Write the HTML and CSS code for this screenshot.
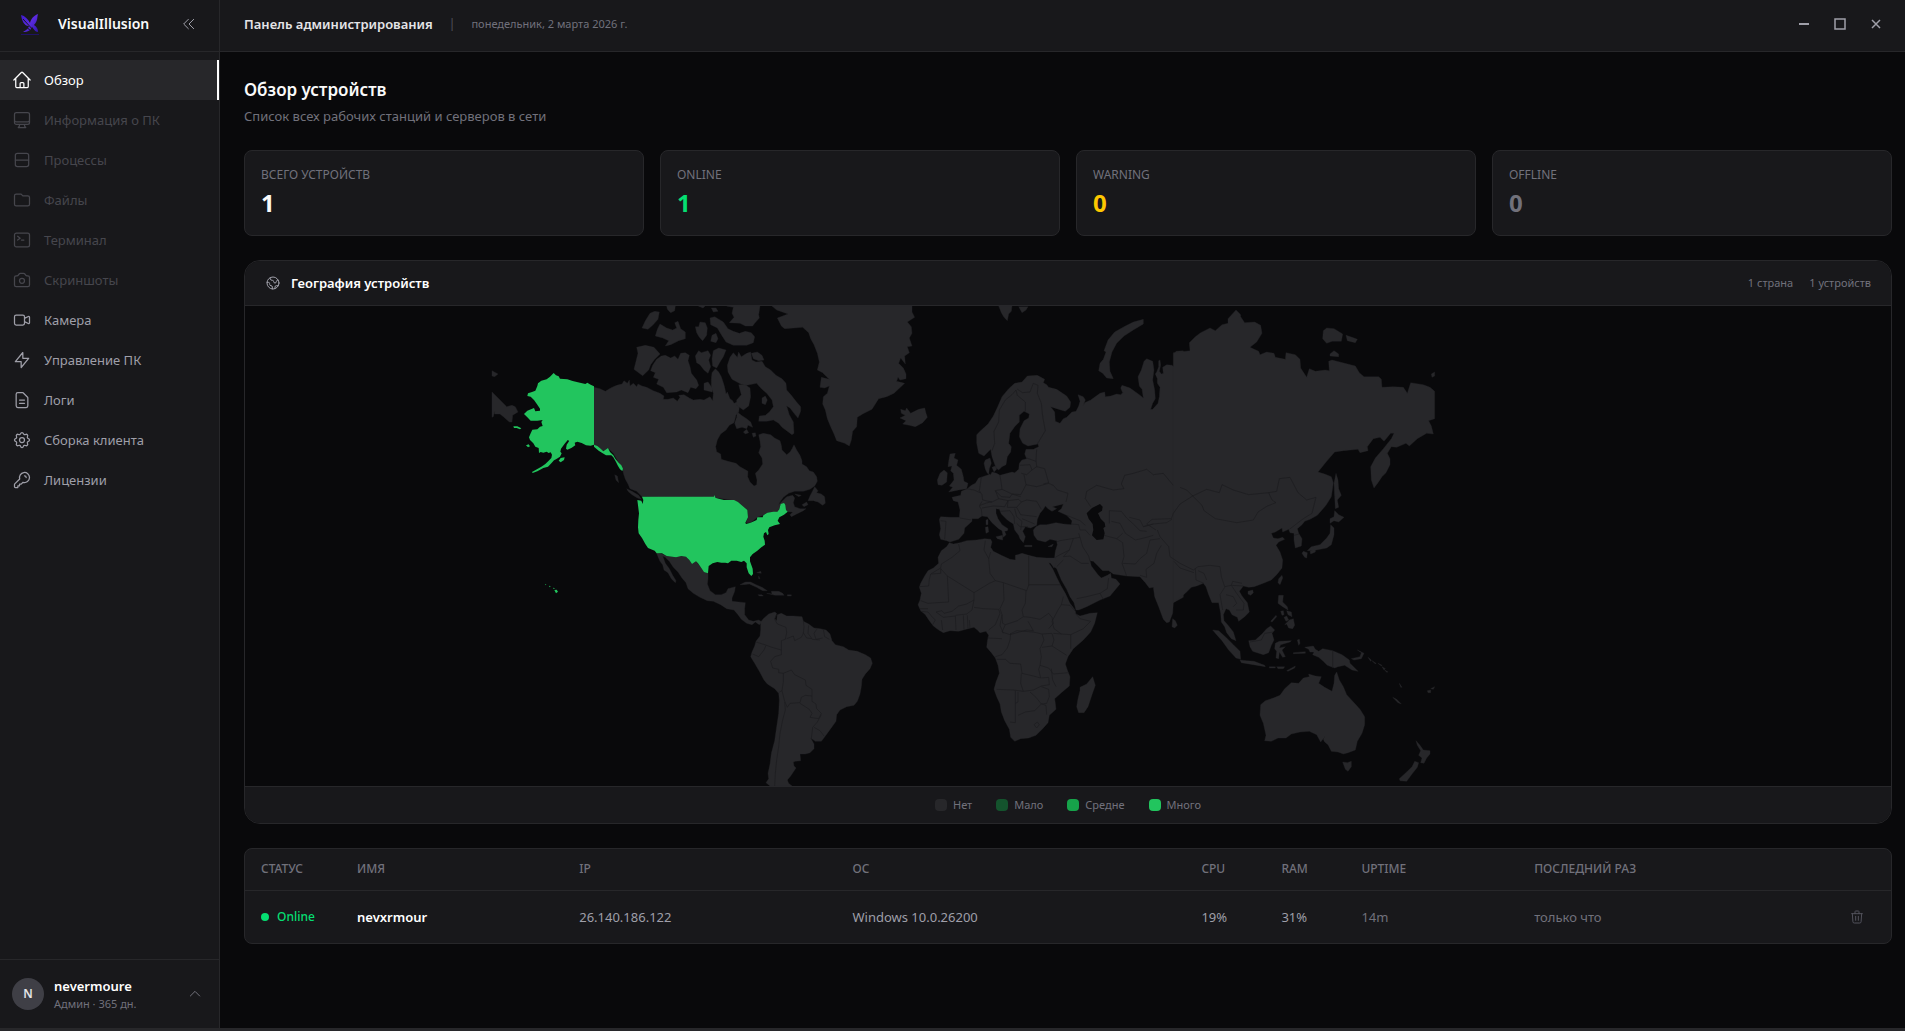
FILE: index.html
```html
<!DOCTYPE html>
<html lang="ru">
<head>
<meta charset="utf-8">
<title>VisualIllusion</title>
<link rel="stylesheet" href="styles.css">
</head>
<body>
<div class="app">
  <aside class="sidebar">
    <div class="brand">
      <svg class="brand-logo" viewBox="0 0 24 24" aria-hidden="true">
        <defs><linearGradient id="lg" x1="0" y1="0" x2="1" y2="1"><stop offset="0" stop-color="#3a17c9"/><stop offset=".5" stop-color="#5b2be0"/><stop offset="1" stop-color="#3216a8"/></linearGradient></defs>
        <path fill="url(#lg)" d="M3 3c4 1 7 4 9 8 1-4 3-7 8-9-1 3 0 7-4 11 3 2 4 4 4 7-3 0-4-3-6-5-1 3-4 5-9 5 3-2 5-3 6-6-5 0-7-5-8-11z"/>
        <path stroke="#18181b" stroke-width="1" fill="none" d="M5 7l12 13M4 11l10 9"/>
        <path stroke="#1e1263" stroke-width="1" d="M3 22.500h18"/>
      </svg>
      <span class="brand-name">VisualIllusion</span>
      <button class="icon-button" type="button" aria-label="Свернуть меню"><svg class="icon-small" viewBox="0 0 24 24"><path d="M11 19l-7-7 7-7m8 14l-7-7 7-7"/></svg></button>
    </div>
    <nav class="nav">
      <a class="nav-item is-active" href="#overview"><svg class="icon" viewBox="0 0 24 24"><path d="M2.250 12l8.954-8.955c.44-.439 1.152-.439 1.591 0L21.750 12M4.500 9.750v10.125c0 .621.504 1.125 1.125 1.125H9.750v-4.875c0-.621.504-1.125 1.125-1.125h2.250c.621 0 1.125.504 1.125 1.125V21h4.125c.621 0 1.125-.504 1.125-1.125V9.750M8.250 21h8.250"/></svg>Обзор</a>
      <a class="nav-item is-disabled" href="#pc"><svg class="icon" viewBox="0 0 24 24"><path d="M9 17.250v1.007a3 3 0 01-.879 2.122L7.500 21h9l-.621-.621A3 3 0 0115 18.257V17.250m6-12V15a2.250 2.250 0 01-2.250 2.250H5.250A2.250 2.250 0 013 15V5.250m18 0A2.250 2.250 0 0018.750 3H5.250A2.250 2.250 0 003 5.250m18 0V12a2.250 2.250 0 01-2.250 2.250H5.250A2.250 2.250 0 013 12V5.250"/></svg>Информация о ПК</a>
      <a class="nav-item is-disabled" href="#processes"><svg class="icon" viewBox="0 0 24 24"><rect x="4" y="4" width="16" height="16" rx="2.500"/><path d="M4 12h16"/></svg>Процессы</a>
      <a class="nav-item is-disabled" href="#files"><svg class="icon" viewBox="0 0 24 24"><path d="M3 7v10a2 2 0 002 2h14a2 2 0 002-2V9a2 2 0 00-2-2h-6l-2-2H5a2 2 0 00-2 2z"/></svg>Файлы</a>
      <a class="nav-item is-disabled" href="#terminal"><svg class="icon" viewBox="0 0 24 24"><path d="M6.750 7.500l3 2.250-3 2.250m4.500 0h3m-9 8.250h13.500A2.250 2.250 0 0021 18V6a2.250 2.250 0 00-2.250-2.250H5.250A2.250 2.250 0 003 6v12a2.250 2.250 0 002.250 2.250z"/></svg>Терминал</a>
      <a class="nav-item is-disabled" href="#screens"><svg class="icon" viewBox="0 0 24 24"><path d="M3 9a2 2 0 012-2h.930a2 2 0 001.664-.890l.812-1.220A2 2 0 0110.070 4h3.860a2 2 0 011.664.890l.812 1.220A2 2 0 0018.070 7H19a2 2 0 012 2v9a2 2 0 01-2 2H5a2 2 0 01-2-2V9z"/><circle cx="12" cy="13" r="3"/></svg>Скриншоты</a>
      <a class="nav-item" href="#camera"><svg class="icon" viewBox="0 0 24 24"><path d="M15 10l4.553-2.276A1 1 0 0121 8.618v6.764a1 1 0 01-1.447.894L15 14M5 18h8a2 2 0 002-2V8a2 2 0 00-2-2H5a2 2 0 00-2 2v8a2 2 0 002 2z"/></svg>Камера</a>
      <a class="nav-item" href="#control"><svg class="icon" viewBox="0 0 24 24"><path d="M13 10V3L4 14h7v7l9-11h-7z"/></svg>Управление ПК</a>
      <a class="nav-item" href="#logs"><svg class="icon" viewBox="0 0 24 24"><path d="M9 12h6m-6 4h6m2 5H7a2 2 0 01-2-2V5a2 2 0 012-2h5.586a1 1 0 01.707.293l5.414 5.414a1 1 0 01.293.707V19a2 2 0 01-2 2z"/></svg>Логи</a>
      <a class="nav-item" href="#build"><svg class="icon" viewBox="0 0 24 24"><path d="M10.325 4.317c.426-1.756 2.924-1.756 3.350 0a1.724 1.724 0 002.573 1.066c1.543-.940 3.310.826 2.370 2.370a1.724 1.724 0 001.065 2.572c1.756.426 1.756 2.924 0 3.350a1.724 1.724 0 00-1.066 2.573c.940 1.543-.826 3.310-2.370 2.370a1.724 1.724 0 00-2.572 1.065c-.426 1.756-2.924 1.756-3.350 0a1.724 1.724 0 00-2.573-1.066c-1.543.940-3.310-.826-2.370-2.370a1.724 1.724 0 00-1.065-2.572c-1.756-.426-1.756-2.924 0-3.350a1.724 1.724 0 001.066-2.573c-.940-1.543.826-3.310 2.370-2.370.996.608 2.296.070 2.572-1.065z"/><circle cx="12" cy="12" r="3"/></svg>Сборка клиента</a>
      <a class="nav-item" href="#licenses"><svg class="icon" viewBox="0 0 24 24"><path d="M15 7a2 2 0 012 2m4 0a6 6 0 01-7.743 5.743L11 17H9v2H7v2H4a1 1 0 01-1-1v-2.586a1 1 0 01.293-.707l5.964-5.964A6 6 0 1121 9z"/></svg>Лицензии</a>
    </nav>
    <button class="account" type="button">
      <span class="avatar">N</span>
      <span class="account-text"><span class="account-name">nevermoure</span><span class="account-plan">Админ · 365 дн.</span></span>
      <svg class="icon-small" viewBox="0 0 24 24"><path d="M5 15l7-7 7 7"/></svg>
    </button>
  </aside>

  <div class="workspace">
    <header class="topbar">
      <span class="topbar-title">Панель администрирования</span>
      <span class="topbar-separator">|</span>
      <span class="topbar-date">понедельник, 2 марта 2026 г.</span>
      <div class="window-controls">
        <button class="window-button" type="button" aria-label="Свернуть"><svg class="window-icon" viewBox="0 0 16 16"><path d="M3 8h10" stroke-width="2"/></svg></button>
        <button class="window-button" type="button" aria-label="Развернуть"><svg class="window-icon" viewBox="0 0 16 16"><path d="M3 3h10v10H3z"/></svg></button>
        <button class="window-button" type="button" aria-label="Закрыть"><svg class="window-icon" viewBox="0 0 16 16"><path d="M4 4l8 8M12 4l-8 8"/></svg></button>
      </div>
    </header>

    <main class="content">
      <div class="page-heading">
        <h1 class="page-title">Обзор устройств</h1>
        <p class="page-subtitle">Список всех рабочих станций и серверов в сети</p>
      </div>

      <section class="stats">
        <div class="stat"><div class="stat-label">Всего устройств</div><div class="stat-value">1</div></div>
        <div class="stat"><div class="stat-label">Online</div><div class="stat-value is-online">1</div></div>
        <div class="stat"><div class="stat-label">Warning</div><div class="stat-value is-warning">0</div></div>
        <div class="stat"><div class="stat-label">Offline</div><div class="stat-value is-offline">0</div></div>
      </section>

      <section class="geo">
        <div class="geo-header">
          <svg class="icon-small" viewBox="0 0 24 24"><path d="M3.055 11H5a2 2 0 012 2v1a2 2 0 002 2 2 2 0 012 2v2.945M8 3.935V5.500A2.500 2.500 0 0010.500 8h.5a2 2 0 012 2 2 2 0 104 0 2 2 0 012-2h1.064M15 20.488V18a2 2 0 012-2h3.064M21 12a9 9 0 11-18 0 9 9 0 0118 0z"/></svg>
          <h2 class="geo-title">География устройств</h2>
          <span class="geo-count">1 страна</span>
          <span class="geo-count">1 устройств</span>
        </div>
        <svg class="map" viewBox="0 0 4938 1440" role="img" aria-label="Карта мира">
          <!-- North America -->
          <g transform="translate(705 -18)">
            <path class="land" d="M342 262L360 266 376 274 392 264 410 256 426 252 432 242 442 250 448 240 450 258 460 250 470 260 474 252 486 258 500 262 520 272 540 280 552 288 550 298 564 298 580 294 592 304 600 292 596 286 612 284 628 294 640 300 660 298 672 300 690 290 698 302 700 280 694 262 694 236 696 218 706 206 716 216 724 230 730 248 734 262 738 282 742 276 750 296 758 302 762 310 772 306 778 322 776 336 768 346 762 368 748 376 738 390 722 402 712 420 707 440 710 455 722 462 724 478 744 484 768 490 780 500 794 508 804 514 803 530 810 546 822 558 830 554 831 540 826 520 836 510 848 492 846 474 836 458 842 440 840 424 836 404 850 400 872 404 884 414 900 422 904 436 906 450 920 464 930 456 936 446 942 434 950 450 960 466 966 482 966 492 980 500 988 512 1000 516 1010 530 1012 544 1004 558 990 568 970 574 944 574 926 580 910 592 900 606 896 614 904 606 920 590 938 586 944 594 940 608 944 620 960 626 978 626 970 632 950 642 934 650 930 644 938 636 923 635 918 630 916 612 902 612 898 628 892 635 862 638 850 646 832 652 812 668 798 668 804 652 802 630 774 606 752 600 706 593 486 590 470 574 450 566 444 552 436 538 430 520 428 506 416 488 400 460 384 444 370 454 342 434Z"/>
            <path class="land" d="M440 566L456 574 476 586 484 598 472 594 456 584 444 574ZM404 524L412 528 416 548 408 540ZM1004 560L1014 572 1010 578 1024 582 1034 590 1036 610 1028 616 1014 606 1000 602 984 602 990 588 998 572ZM944 582L964 586 956 590ZM966 614L980 606 984 614 972 620Z"/>
            <path class="land" d="M470 142L496 136 522 142 540 162 524 178 512 194 506 210 488 227 462 208 468 184 474 160ZM544 168L556 166 572 174 584 168 594 178 602 160 616 158 628 166 624 182 630 200 634 220 650 240 656 256 648 266 632 262 624 278 604 270 590 276 560 278 550 262 530 252 536 238 520 232 526 218 512 212 518 196 530 178ZM646 168L656 152 664 158 684 152 692 166 686 180 692 200 684 220 672 210 660 194 650 188ZM700 152L716 144 738 150 730 170 720 186 710 204 698 198 696 176ZM672 250L684 246 698 266 696 276 672 270Z"/>
            <path class="land" d="M742 196L750 172 760 158 772 172 776 156 784 170 800 160 812 156 816 180 828 186 846 184 856 200 872 210 888 226 906 236 918 250 920 270 934 286 948 304 962 320 962 334 954 354 942 340 930 324 920 318 928 344 940 366 942 400 936 404 920 392 906 382 896 370 880 360 860 364 836 364 838 348 856 346 868 336 880 320 876 300 860 280 840 262 830 250 800 256 782 252 756 238 744 216ZM814 160L832 156 846 166 852 180 836 182 820 176ZM846 294L856 288 862 300 856 314 846 310ZM776 254L796 254 810 264 812 290 806 318 790 330 770 316 770 300 784 284ZM772 336L784 346 800 356 812 366 818 382 804 376 800 386 786 382 770 386 764 370 770 352ZM790 396L800 388 806 398 796 402ZM816 400L826 398 828 408 820 412Z"/>
            <path class="land" d="M690 54L704 50 730 66 744 86 760 94 778 100 796 94 814 98 824 110 820 128 800 136 760 136 738 126 724 104 712 84 692 74ZM696 106L708 100 714 116 708 128 692 124ZM646 80L656 80 660 66 676 68 682 84 680 106 668 122 658 112 650 98ZM540 72L560 84 578 90 590 84 584 68 594 64 602 86 616 96 616 116 596 122 572 134 556 138 566 122 548 114 526 108 532 88ZM486 84L496 62 510 40 524 34 538 36 534 58 518 76 504 88ZM560 18L586 18 584 32 572 38 562 28ZM655 18L675 18 669 24ZM694 24L708 24 714 34 700 36ZM760 22L740 18 840 18 836 44 838 54 824 70 818 78 796 78 780 70 748 68 762 52 756 40Z"/>
            <path class="land" d="M36 276L60 300 80 320 96 316 106 320 114 336 98 346 96 366 88 366 70 350 60 342 44 342 44 334 40 350 36 352ZM36 212L54 222 44 230 36 228Z"/>
            <path class="land" d="M530 760L546 762 560 768 588 772 604 768 618 770 628 780 636 792 648 784 664 804 684 820 684 836 682 852 690 872 706 884 724 884 738 878 744 866 766 860 764 874 756 894 756 904 776 906 796 908 794 926 794 944 806 960 820 964 836 960 846 966 838 974 826 966 816 974 800 970 784 958 774 944 762 930 740 926 722 914 700 904 682 902 660 892 640 880 624 866 618 848 606 834 594 816 580 802 568 784 556 772 548 768 556 790 568 806 578 826 588 842 586 848 574 836 564 818 552 810 548 794 540 784 534 770Z"/>
            <path class="land" d="M780 854L796 846 812 846 828 854 846 862 862 872 848 872 830 862 808 852 790 854ZM860 880L876 882 874 874 896 874 908 880 912 886 886 886ZM834 884L846 884 850 888 838 888ZM922 884L934 884 934 888 922 888ZM830 818L842 814 844 820ZM836 828L840 836 836 836Z"/>
            <path class="land-active" d="M221 219L228 226 236 229 240 236 262 238 278 243 300 248 316 252 322 248 332 254 342 259 342 434 332 437 318 436 305 429 292 425 284 428 286 436 274 444 262 449 258 446 260 434 267 424 264 419 254 431 243 446 241 455 245 460 240 470 228 478 222 481 214 490 204 500 190 504 172 514 158 519 156 516 172 507 184 500 196 492 206 482 214 474 216 464 212 457 206 459 200 455 190 458 182 456 177 459 176 444 166 440 160 430 150 420 147 412 152 400 157 389 172 388 180 380 188 378 184 366 188 360 172 362 152 362 142 352 132 342 142 332 162 324 166 334 180 332 180 326 172 314 162 300 152 290 142 288 144 280 156 276 166 272 172 258 174 250 184 242 200 238 210 230ZM342 434L352 438 362 446 370 454 384 444 390 456 400 466 406 476 416 488 424 496 429 506 427 513 420 508 414 498 408 486 400 472 394 466 378 466 368 460 356 452 342 440ZM236 482L242 474 254 472 252 480 242 487ZM138 436L146 433 150 439 144 442ZM100 379L112 379 124 385 120 388 110 384 102 384ZM223 870L230 869 234 875 228 880ZM207 857L212 859 209 862ZM195 853L199 853 197 856ZM219 863L225 865 221 867Z"/>
            <path class="land-active" d="M486 590L702 590 704 585 706 593 716 596 732 600 752 600 762 600 774 606 788 618 802 630 804 652 796 668 798 672 812 668 830 660 832 652 848 652 850 646 862 638 880 635 892 635 898 628 902 612 912 609 916 614 918 630 923 635 912 644 898 652 893 662 900 672 884 676 868 682 864 690 866 702 862 706 858 696 852 700 850 710 854 722 855 734 844 742 832 752 818 762 810 772 810 784 818 806 819 822 814 828 806 820 800 802 800 790 792 782 784 786 770 782 754 782 744 790 736 788 724 788 712 786 698 790 686 798 684 820 672 816 664 804 654 790 648 784 636 792 628 780 618 770 604 768 588 772 560 768 546 760 530 760 524 752 504 744 496 732 486 714 476 700 474 682 475 660 477 640 472 600 484 602 488 612 490 600Z"/>
          </g>
          <!-- Greenland, Iceland, South America -->
          <g transform="translate(1485 -18)">
            <path class="land" d="M96 18L110 30 144 42 112 54 124 78 134 86 188 82 206 98 212 116 222 134 232 160 238 186 232 210 248 218 260 230 268 238 244 232 240 262 254 264 268 258 262 280 250 290 248 312 256 330 262 356 272 380 282 402 290 422 314 430 328 438 334 420 338 394 350 380 352 352 368 342 396 328 416 296 440 290 462 280 494 250 470 244 474 232 480 240 498 236 498 222 490 204 476 190 482 174 496 192 494 168 508 158 502 140 516 138 508 114 516 100 514 80 502 66 524 52 516 36 516 18Z"/>
            <path class="land" d="M482 328L496 332 500 324 512 340 524 334 536 328 554 324 558 340 562 352 548 368 526 380 508 376 488 372 498 362 480 354 496 346 484 340Z"/>
            <path class="land" d="M62 966L70 956 86 942 104 936 110 940 104 956 110 962 112 944 124 940 140 948 160 948 186 950 190 964 206 972 222 984 240 986 258 990 270 1002 276 1022 286 1034 310 1040 326 1050 352 1054 376 1064 392 1074 397 1090 390 1106 376 1122 366 1138 364 1160 360 1182 352 1204 342 1216 320 1220 300 1230 290 1244 288 1264 272 1286 256 1308 244 1324 226 1324 212 1314 222 1332 222 1346 210 1358 196 1362 180 1362 182 1382 166 1384 160 1386 162 1398 168 1404 160 1416 152 1428 142 1440 146 1450 156 1458 90 1458 78 1448 86 1436 84 1420 90 1392 94 1360 104 1322 110 1280 116 1240 118 1200 116 1180 104 1166 82 1152 72 1140 58 1114 44 1090 32 1070 36 1056 44 1038 48 1024 60 1008 62 990Z"/>
            <path class="frontier" d="M110 944L104 958 112 972 138 982 140 998 136 1018 124 1022 124 1050M48 1026L74 1034 96 1042 124 1050 124 1064 104 1070 92 1084 98 1104 116 1108 116 1118M78 1036L72 1050 56 1070 38 1062M190 962L192 980 190 1000 184 1012 164 1022 160 1008 140 1016M206 976L204 1000 216 1016 200 1014 190 998M230 988L222 1000 228 1018 248 1014M250 988L254 1010 268 1018M216 1018L240 1020M116 1118L130 1120 154 1110 164 1124 196 1140 198 1156 216 1168 216 1188 196 1186 184 1192 180 1208 150 1210 142 1222 134 1204 126 1172 130 1146 130 1120M180 1210L208 1228 216 1240 210 1252 236 1256 244 1240 230 1226 228 1212 216 1204 216 1188M244 1244L232 1266 218 1282 214 1316M222 1282L240 1292 252 1308M134 1206L136 1230 128 1260 120 1300 116 1340 110 1380 106 1420 104 1458M118 1176L126 1172"/>
          </g>
          <!-- Europe, Africa, western Asia -->
          <g transform="translate(1965 -18)">
            <path class="land" d="M850 152L828 154 822 164 828 206 816 196 800 194 788 202 790 220 784 222 778 214 782 196 780 180 776 182 776 200 770 216 766 222 772 236 772 250 780 262 778 290 774 310 758 328 752 328 758 310 766 296 764 270 758 240 762 210 758 184 740 176 732 184 724 210 714 230 718 258 726 268 730 294 718 284 690 264 666 256 662 264 668 278 662 284 650 282 632 288 616 290 614 276 600 280 572 300 554 308 550 316 556 300 550 290 534 284 540 304 536 318 528 334 516 336 500 352 490 356 480 370 466 364 464 336 452 320 470 326 496 334 510 322 512 306 500 288 470 268 446 262 440 254 430 248 434 238 412 226 382 228 366 246 344 250 326 266 306 290 294 318 280 348 264 372 240 394 230 404 230 430 236 460 252 468 266 454 272 448 276 470 288 504 296 510 306 500 318 494 322 470 332 456 334 440 326 430 330 400 344 380 358 366 358 346 372 334 388 342 386 354 372 362 360 386 358 410 368 430 384 438 414 432 416 440 400 448 378 448 374 462 380 476 366 480 358 490 356 508 344 518 336 516 300 526 290 520 276 516 272 524 262 520 256 508 252 490 256 480 270 474 274 490 268 506 266 524 248 530 236 534 226 550 214 556 202 566 184 574 182 586 156 592 160 602 174 606 180 630 178 652 150 652 122 650 118 658 122 686 118 704 122 718 140 722 150 726 176 718 192 700 194 684 216 664 216 656 234 656 246 648 262 650 276 668 296 686 306 692 310 712 318 704 314 694 322 692 324 686 306 674 294 656 288 640 288 626 298 628 304 642 322 660 340 672 344 690 356 706 360 716 370 728 376 710 368 694 376 680 392 684 400 680 410 676 412 658 420 640 430 628 436 618 444 626 456 634 470 626 458 620 490 612 484 626 474 634 500 646 516 662 514 674 490 672 468 668 440 674 420 674 408 680 400 690 402 706 412 720 436 726 450 718 470 722 472 734 466 754 464 770 462 800 470 806 484 840 500 868 510 890 522 908 528 930 536 930 560 920 600 900 630 888 660 852 648 838 634 834 632 820 622 826 604 834 594 824 586 814 574 798 570 782 580 784 592 796 608 812 626 812 640 822 680 828 720 830 736 848 748 864 760 862 764 890 776 920 790 958 800 968 808 966 818 940 820 908 850 892Z"/>
            <path class="water" d="M560 640L576 624 600 612 608 620 606 632 594 640 602 656 614 668 616 680 610 684 614 700 610 718 590 720 576 706 580 690 578 672 566 656Z"/>
            <path class="land" d="M148 728L140 740 124 752 114 772 116 790 100 804 84 812 74 828 62 850 58 862 64 880 60 900 54 914 62 932 76 944 88 962 100 978 116 990 130 998 150 992 176 994 204 986 222 982 232 990 240 998 258 994 266 1006 262 1024 260 1042 274 1058 286 1074 294 1096 298 1120 288 1146 282 1168 290 1190 300 1212 304 1236 314 1262 328 1288 332 1312 344 1324 362 1316 386 1314 408 1306 428 1286 444 1268 448 1246 468 1228 466 1210 464 1196 484 1178 508 1158 510 1130 502 1110 496 1092 504 1070 520 1046 550 1020 572 996 584 970 592 938 570 940 540 948 528 942 524 928 510 910 496 880 482 856 470 832 458 806 446 788 452 790 462 804 470 786 466 774 440 774 410 772 386 766 366 760 346 766 346 780 330 778 304 766 280 754 272 742 276 726 272 718 254 716 230 720 200 722 180 728 160 732ZM578 1130L586 1156 576 1184 564 1220 552 1238 536 1238 530 1220 534 1196 540 1172 540 1162 560 1152 570 1140Z"/>
            <path class="land" d="M730 58L730 72 700 90 672 108 650 130 636 156 628 186 630 214 640 236 620 234 608 220 596 212 600 190 610 178 618 156 612 152 624 120 644 96 676 78 700 66ZM296 18L336 18 334 34 326 42 322 62 312 52 304 38ZM356 20L384 20 378 30 366 38ZM150 462L166 460 162 474 174 480 170 496 184 508 190 530 192 544 204 550 200 566 176 570 146 576 158 562 148 558 162 540 160 520 152 512 156 498 144 500 146 484ZM112 540L120 520 132 510 142 518 140 546 126 556 114 554ZM258 660L264 658 264 674 258 674ZM256 682L264 680 266 696 258 700ZM288 710L308 706 308 720 292 716ZM374 736L396 736 396 740 374 740ZM444 740L460 732 456 740ZM276 502L286 498 290 508 282 516Z"/>
            <path class="frontier" d="M276 452L284 430 282 394 296 366 298 330 316 300 336 284 348 270 352 286 376 306 376 334M352 268L368 278 390 276 400 250 414 256 412 280 424 310 428 350 436 392 412 432M410 448L408 480 410 500 434 506 446 548 430 552M380 474L408 484M360 496L390 494 396 510 380 524 364 520M396 510L410 500M300 526L304 552 306 568 336 582 362 584 370 570 378 554 372 524M378 554L410 560 446 550 460 556 472 570 504 580 498 606M244 530L240 560 238 572 246 584 248 600 276 606 296 596 286 572 306 568M200 566L222 570 240 578M246 604L238 618 244 628 246 648M180 654L214 660M122 662L138 664 134 718M240 616L262 608 276 606M246 624L280 618 314 620 324 602 296 596M324 602L356 598 364 606 350 622 322 622ZM286 572L304 590 330 592 336 582 362 590M364 606L380 600 410 604 424 628M350 622L362 644 410 650M300 634L330 632 342 650 344 672M344 626L350 650 366 664 362 690M366 656L404 672M350 670L360 680 384 680"/>
            <path class="frontier" d="M500 646L540 662 556 676M516 672L536 674 540 690 556 690 570 706M536 700L540 712 480 722 470 726M520 716L508 750 480 764 466 772M540 712L548 740 566 768 570 784M508 750L490 770 510 768 544 790 566 790M470 800L490 780M530 896L560 890 600 880 610 898M600 880L622 866 626 834M612 706L650 716 668 728 672 770 666 790 680 828M650 716L668 700M628 670L628 632 664 634 680 654 700 672 720 692 740 694M634 664L660 670 676 700 706 720M668 790L706 792 720 776 740 760 750 720 780 716M706 720L740 712 760 706M720 826L740 832 738 808 762 790 770 760 784 736M572 620L556 596 560 574 590 556 640 570 672 566 664 552 674 526 700 520 740 508 760 524 790 520 820 556 840 562M688 652L720 660 730 680 760 672"/>
            <path class="frontier" d="M176 732L180 752 156 772 124 792 122 804 92 822 88 838 86 858 58 860M122 806L122 820 94 822M122 806L142 828 146 906 112 908 84 910 62 902M142 828L222 878 222 900 200 912 176 918 156 934 132 940 126 932 108 936M222 878L268 850 286 842 270 820 266 776 252 750 256 722M266 776L272 756M286 842L310 848 380 872 386 856 386 768M386 854L480 854M310 848L312 900 300 926 306 944 308 970 316 974M378 872L376 910 366 930 370 950M222 922L250 926 296 928 300 940 286 974 266 990M370 950L390 952 420 958 446 940 456 952 460 970 446 986M370 950L352 962 316 974 306 996 330 1004 380 990 400 992 384 964M262 1014L306 1016M306 944L300 976 310 1000M332 1000L330 1020 322 1044 306 1064 286 1070M330 1002L350 992 400 996 426 1002 432 1020 420 1046 424 1070 420 1096 416 1108 422 1134 400 1128 366 1120 362 1092 330 1090 316 1078 290 1078M426 1002L456 1000 462 1020 456 1038 426 1042M460 1000L484 1002 512 1004 550 986 572 964 540 956 526 940M512 1004L512 1046M456 1038L500 1066M456 964L474 930 484 914 510 916 528 936M456 964L462 986 484 1002M484 914L490 890M420 1096L446 1104 460 1122 506 1118M454 1106L458 1140 468 1160M290 1168L340 1170 370 1174 362 1150 364 1120M370 1174L400 1170 424 1158 448 1154 446 1132 424 1134M346 1172L346 1268 330 1266M346 1210L354 1206 354 1176M354 1246L376 1236 404 1232 424 1212 408 1192 390 1176M424 1212L440 1210 448 1190 446 1168 424 1160M424 1212L438 1216 440 1244M402 1274L412 1266 418 1274 410 1284ZM124 960L128 990M108 936L130 952 166 948 168 990M190 946L192 988M202 946L204 986M208 960L210 984M166 946L200 942 216 930 222 900M60 926L84 926M62 934L84 936 96 950 106 960 98 974"/>
          </g>
          <!-- East Asia and Oceania -->
          <g transform="translate(2655 -18)">
            <path class="land" d="M130 158L180 152 178 128 196 110 212 98 240 84 256 92 276 74 294 70 294 56 318 30 332 44 332 50 344 68 374 66 392 76 396 100 380 126 360 142 386 154 390 164 410 156 432 160 436 172 466 178 468 158 496 164 510 178 512 204 530 232 538 206 556 214 586 210 598 212 596 184 606 180 676 198 688 218 702 230 746 230 754 238 756 262 790 260 820 262 832 280 842 248 880 254 900 262 914 274 914 356 896 362 904 378 910 402 890 400 862 416 838 438 828 430 800 442 784 440 772 460 780 476 780 494 768 518 756 530 744 548 732 564 724 540 722 500 736 474 760 446 784 416 792 400 782 400 762 424 750 412 730 416 712 440 714 452 690 458 684 448 640 452 614 456 590 484 564 516 584 522 604 530 610 548 604 590 588 616 562 646 540 658 524 664 516 674 502 686 506 700 516 716 514 738 496 744 492 720 492 700 480 698 476 688 458 696 456 684 436 696 424 700 430 714 444 716 458 712 464 718 446 726 438 736 450 756 458 780 456 804 440 824 424 840 400 850 372 860 356 862 340 858 328 874 336 888 352 908 358 936 344 950 326 964 322 952 306 944 298 930 288 926 280 944 282 962 296 978 310 996 318 1022 304 1016 290 998 284 980 274 966 272 940 266 908 246 908 236 884 228 860 220 850 200 858 184 862 166 880 130 908Z"/>
            <path class="land" d="M618 520L624 540 626 566 634 586 622 600 626 622 616 626 614 590 612 550ZM614 632L626 644 642 652 626 666 612 662 600 670 600 656 612 650ZM602 674L612 684 612 704 604 734 590 744 570 748 548 752 532 752 544 740 570 734 590 714 600 700ZM520 754L532 758 530 774 524 772 516 760ZM540 754L556 750 556 756 542 762ZM446 836L456 826 458 834 450 854 444 848ZM354 874L368 870 370 878 362 886 354 882ZM128 956L136 962 142 976 134 984 126 980ZM446 886L460 886 458 906 472 920 474 930 458 920 444 910ZM470 932L484 936 486 950 474 944ZM452 934L460 932 462 944 456 946ZM462 952L470 948 476 960 468 964ZM464 974L478 960 490 956 494 976 488 986 476 984 470 972ZM422 964L438 946 440 950 426 966Z"/>
            <path class="land" d="M248 990L266 992 290 1014 310 1034 330 1054 332 1078 318 1074 296 1050 276 1022 258 1002ZM330 1080L350 1082 372 1084 404 1096 406 1100 370 1094 334 1088ZM418 1100L436 1100 436 1104 418 1104ZM440 1100L464 1100 460 1106 444 1106ZM470 1112L496 1098 494 1104 474 1114ZM356 1022L376 1020 396 1002 410 986 422 978 434 990 426 1000 432 1020 424 1036 416 1058 400 1064 368 1054 360 1040ZM436 1030L448 1024 484 1022 480 1026 452 1034 448 1044 466 1040 456 1050 466 1070 458 1072 448 1056 446 1076 438 1074 440 1054 434 1046ZM502 1020L508 1018 510 1030 506 1036ZM490 1058L526 1055 526 1060 490 1061ZM524 1042L550 1038 556 1048 566 1054 578 1046 608 1052 636 1064 658 1080 660 1090 684 1114 666 1110 644 1096 624 1100 614 1104 592 1096 580 1084 566 1072 548 1064 552 1056 540 1056 536 1048ZM664 1076L690 1070 694 1058 682 1050 702 1060 694 1076 672 1080ZM714 1072L724 1080 722 1084ZM726 1082L738 1090 736 1092ZM744 1090L756 1096 754 1098ZM756 1100L766 1106 762 1110ZM764 1110L774 1116 770 1117ZM808 1150L816 1162 812 1162ZM788 1192L800 1198 814 1212 804 1208ZM892 1172L902 1170 902 1178 894 1178ZM902 1166L914 1160 910 1168Z"/>
            <path class="land" d="M620 1116L628 1140 640 1160 650 1184 670 1206 690 1228 704 1250 704 1274 696 1300 682 1324 676 1350 654 1358 640 1362 624 1356 604 1354 594 1334 584 1326 580 1318 586 1308 572 1326 560 1304 538 1294 510 1296 484 1302 468 1314 444 1314 424 1324 404 1322 408 1306 400 1270 390 1246 392 1214 406 1202 430 1194 450 1186 464 1166 484 1148 506 1150 520 1134 538 1130 536 1122 556 1128 574 1130 566 1150 584 1162 606 1174 612 1150 614 1126ZM638 1386L652 1388 664 1384 664 1400 654 1414 646 1408ZM858 1322L870 1336 880 1350 900 1352 900 1362 890 1374 882 1390 872 1388 876 1374 866 1366 872 1352 862 1336ZM854 1384L866 1388 862 1402 846 1422 830 1444 810 1442 808 1436 830 1416 846 1400Z"/>
            <path class="land" d="M580 92L590 84 612 86 638 102 634 124 606 124 590 130 578 116ZM648 106L666 112 682 118 676 128 652 122ZM600 162L612 152 626 162 626 170 600 168ZM904 222L914 216 914 228 906 232Z"/>
            <path class="frontier" d="M150 562L170 570 188 588 150 612 130 640 124 656 66 658 50 672 78 690M188 588L216 616 222 632 256 656 320 668 370 660 384 636 412 618 438 608 426 600 416 578 356 584 310 570 276 554 268 578 230 568ZM416 578L440 574 448 536 480 532 504 578 530 600 558 592 546 640 520 656 478 688M40 680L70 672 110 668 126 658M82 690L90 710 116 740 120 770 150 790 190 810 204 800 240 796 270 800M132 784L150 804 192 818M196 806L198 840 222 850M204 812L222 820 230 840M270 800L274 830 284 860 304 856 340 858M284 862L270 884 278 930M304 856L308 844 336 850M304 856L320 880 342 910 340 930 318 930M288 884L310 890 320 910 310 920M492 706L508 702M608 1052L608 1104M360 1026L394 1020 404 1000 430 996"/>
          </g>
        </svg>
        <ul class="legend">
          <li class="legend-item"><span class="swatch swatch-none"></span>Нет</li>
          <li class="legend-item"><span class="swatch swatch-low"></span>Мало</li>
          <li class="legend-item"><span class="swatch swatch-medium"></span>Средне</li>
          <li class="legend-item"><span class="swatch swatch-high"></span>Много</li>
        </ul>
      </section>

      <section class="devices">
        <table class="devices-table">
          <colgroup><col class="col-status"><col class="col-name"><col class="col-ip"><col class="col-os"><col class="col-load"><col class="col-load"><col class="col-uptime"><col></colgroup>
          <thead>
            <tr><th>Статус</th><th>Имя</th><th>IP</th><th>ОС</th><th>CPU</th><th>RAM</th><th>Uptime</th><th>Последний раз</th></tr>
          </thead>
          <tbody>
            <tr>
              <td><span class="status">Online</span></td>
              <td class="device-name">nevxrmour</td>
              <td>26.140.186.122</td>
              <td>Windows 10.0.26200</td>
              <td>19%</td>
              <td>31%</td>
              <td class="muted">14m</td>
              <td class="muted"><div class="last-seen">только что<button class="delete-button" type="button" aria-label="Удалить"><svg class="icon-small" viewBox="0 0 24 24"><path d="M19 7l-.867 12.142A2 2 0 0116.138 21H7.862a2 2 0 01-1.995-1.858L5 7m5 4v6m4-6v6m1-10V4a1 1 0 00-1-1h-4a1 1 0 00-1 1v3M4 7h16"/></svg></button></div></td>
            </tr>
          </tbody>
        </table>
      </section>
    </main>
  </div>
</div>
</body>
</html>
```
FILE: styles.css
```css
* {
  box-sizing: border-box;
}

body {
  margin: 0;
  background: #09090b;
  color: #fafafa;
  font-family: "Noto Sans", "Open Sans", sans-serif;
  font-size: 13px;
  line-height: 20px;
}

h1,
h2,
p,
ul {
  margin: 0;
  padding: 0;
}

button {
  padding: 0;
  border: 0;
  background: none;
  color: inherit;
  font: inherit;
}

svg {
  display: block;
}

.app {
  display: flex;
  min-height: 100vh;
  border-bottom: 3px solid #27272a;
}

.sidebar {
  display: flex;
  flex-direction: column;
  flex: none;
  width: 220px;
  border-right: 1px solid #27272a;
  background: #18181b;
}

.brand {
  display: flex;
  align-items: center;
  height: 52px;
  padding: 0 22px 4px 18px;
  border-bottom: 1px solid #27272a;
}

.brand-logo {
  width: 24px;
  height: 24px;
  margin-right: 16px;
}

.brand-name {
  flex: 1;
  font-size: 14px;
  font-weight: 600;
}

.icon,
.icon-small {
  flex: none;
  fill: none;
  stroke: currentColor;
  stroke-width: 1.5;
  stroke-linecap: round;
  stroke-linejoin: round;
}

.icon {
  width: 20px;
  height: 20px;
}

.icon-small {
  width: 16px;
  height: 16px;
}

.icon-button {
  color: #9f9fa9;
}

.nav {
  flex: 1;
  padding-top: 8px;
}

.nav-item {
  display: flex;
  align-items: center;
  gap: 12px;
  height: 40px;
  padding: 0 12px;
  border-right: 2px solid transparent;
  color: #9f9fa9;
  text-decoration: none;
}

.nav-item.is-active {
  border-right-color: #ffffff;
  background: #27272a;
  color: #ffffff;
}

.nav-item.is-disabled {
  color: #46464d;
}

.account {
  display: flex;
  align-items: center;
  gap: 10px;
  padding: 16px 16px 16px 12px;
  border-top: 1px solid #27272a;
  color: #71717b;
  text-align: left;
}

.avatar {
  width: 32px;
  height: 32px;
  border-radius: 50%;
  background: #3f3f46;
  color: #e4e4e7;
  font-size: 12px;
  font-weight: 600;
  line-height: 32px;
  text-align: center;
}

.account-text {
  display: flex;
  flex: 1;
  flex-direction: column;
}

.account-name {
  color: #ffffff;
  font-weight: 600;
}

.account-plan {
  font-size: 11px;
  line-height: 16px;
}

.workspace {
  display: flex;
  flex: 1;
  flex-direction: column;
  min-width: 0;
}

.topbar {
  display: flex;
  align-items: center;
  gap: 16px;
  height: 52px;
  padding: 0 11px 4px 24px;
  border-bottom: 1px solid #27272a;
  background: #18181b;
}

.topbar-title {
  color: #e4e4e7;
  font-weight: 600;
}

.topbar-separator {
  color: #52525c;
  font-size: 12px;
}

.topbar-date {
  color: #71717b;
  font-size: 11px;
}

.window-controls {
  display: flex;
  margin-left: auto;
}

.window-button {
  display: flex;
  align-items: center;
  justify-content: center;
  width: 36px;
  height: 32px;
  color: #9f9fa9;
}

.window-icon {
  width: 16px;
  height: 16px;
  fill: none;
  stroke: currentColor;
  stroke-width: 1.5;
}

.content {
  display: flex;
  flex-direction: column;
  gap: 24px;
  padding: 24px 13px 24px 24px;
}

.page-title {
  margin-bottom: 2px;
  font-size: 17px;
  font-weight: 600;
  line-height: 28px;
}

.page-subtitle {
  color: #71717b;
}

.stats {
  display: grid;
  grid-template-columns: repeat(4, 1fr);
  gap: 16px;
}

.stat {
  padding: 16px;
  border: 1px solid #27272a;
  border-radius: 8px;
  background: #18181b;
}

.stat-label {
  margin-bottom: 4px;
  color: #71717b;
  font-size: 12px;
  line-height: 16px;
  text-transform: uppercase;
}

.stat-value {
  font-size: 24px;
  font-weight: 700;
  line-height: 32px;
}

.stat-value.is-online {
  color: #05df72;
}

.stat-value.is-warning {
  color: #fdc700;
}

.stat-value.is-offline {
  color: #71717b;
}

.geo {
  overflow: hidden;
  border: 1px solid #27272a;
  border-radius: 16px;
}

.geo-header {
  display: flex;
  align-items: center;
  gap: 16px;
  height: 45px;
  padding: 0 20px;
  border-bottom: 1px solid #27272a;
  background: #18181b;
  color: #9f9fa9;
}

.geo-title {
  flex: 1;
  margin-left: -6px;
  color: #ffffff;
  font-size: 13px;
  font-weight: 600;
}

.geo-count {
  color: #71717b;
  font-size: 11px;
}

.map {
  width: 100%;
  height: 480px;
}

.land {
  fill: #27272a;
  stroke: #27272a;
  stroke-width: 1;
}

.land-active {
  fill: #22c55e;
}

.water {
  fill: #09090b;
}

.frontier {
  fill: none;
  stroke: #1b1b1e;
  stroke-width: 2;
}

.legend {
  display: flex;
  justify-content: center;
  gap: 24px;
  padding: 8px 20px;
  border-top: 1px solid #27272a;
  background: #18181b;
  list-style: none;
}

.legend-item {
  display: flex;
  align-items: center;
  gap: 6px;
  color: #71717b;
  font-size: 11px;
}

.swatch {
  width: 12px;
  height: 12px;
  border-radius: 4px;
}

.swatch-none {
  background: #27272a;
}

.swatch-low {
  background: #14532d;
}

.swatch-medium {
  background: #16a34a;
}

.swatch-high {
  background: #22c55e;
}

.devices {
  overflow: hidden;
  border: 1px solid #27272a;
  border-radius: 8px;
  background: #18181b;
}

.devices-table {
  width: 100%;
  border-collapse: collapse;
  table-layout: fixed;
  text-align: left;
}

.col-status {
  width: 96px;
}

.col-name {
  width: 13.5%;
}

.col-ip {
  width: 16.6%;
}

.col-os {
  width: 21.2%;
}

.col-load {
  width: 80px;
}

.col-uptime {
  width: 10.5%;
}

.devices-table th {
  height: 41px;
  padding: 0 16px;
  border-bottom: 1px solid #27272a;
  color: #71717b;
  font-size: 12px;
  font-weight: 500;
  text-transform: uppercase;
}

.devices-table td {
  height: 53px;
  padding: 0 16px;
  color: #9f9fa9;
}

.devices-table .device-name {
  color: #ffffff;
  font-weight: 600;
}

.devices-table .muted {
  color: #71717b;
}

.status {
  display: flex;
  align-items: center;
  gap: 8px;
  color: #05df72;
  font-size: 12px;
  font-weight: 500;
}

.status::before {
  width: 8px;
  height: 8px;
  border-radius: 50%;
  background: #05df72;
  content: "";
}

.last-seen {
  display: flex;
  align-items: center;
  justify-content: space-between;
}

.delete-button {
  padding: 6px 10px;
  color: #52525c;
}
```
